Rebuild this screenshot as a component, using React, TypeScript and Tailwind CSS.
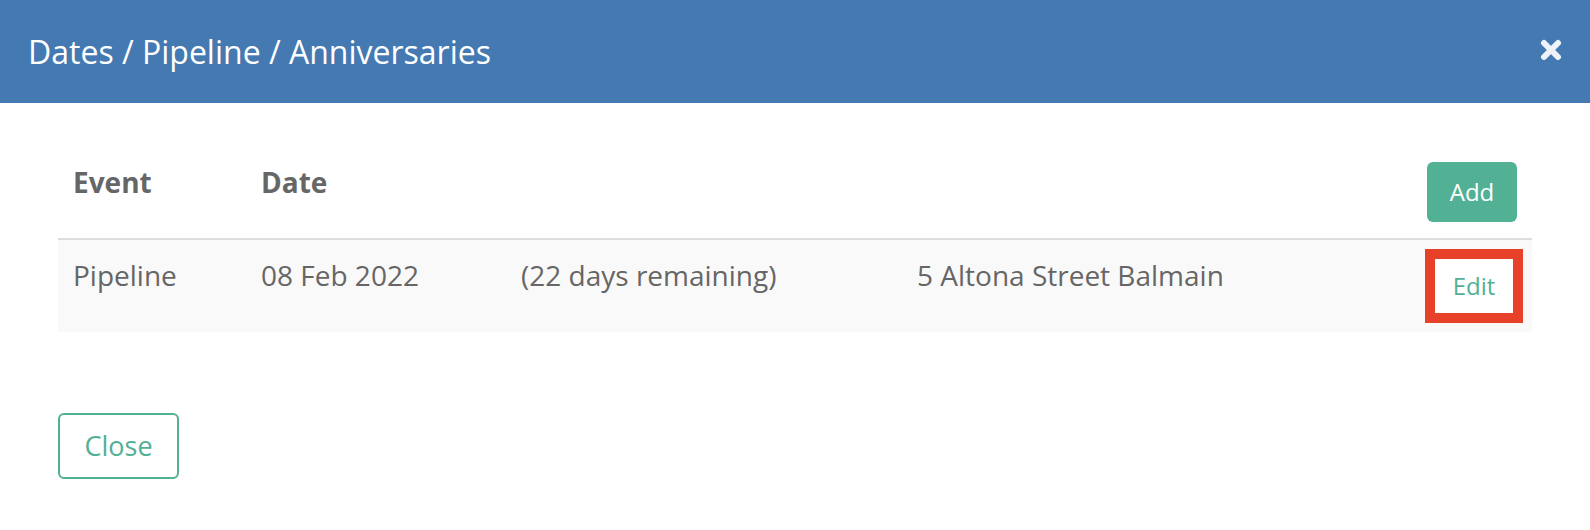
import React from "react";

export default function App() {
  const font = { fontFamily: '"Open Sans", "Noto Sans", sans-serif' };
  return (
    <div className="w-[1590px] h-[530px] bg-white overflow-hidden" style={font}>
      <div className="h-[103px] bg-[#4479b2] flex items-center justify-between pl-[28px] pr-[28px]">
        <div className="text-[32px] leading-[40px] text-white">Dates / Pipeline / Anniversaries</div>
        <svg width="22" height="22" viewBox="0 0 22 22" className="mt-[-4px]">
          <path d="M4 4 L18 18 M18 4 L4 18" stroke="#eef3f9" strokeWidth="6" strokeLinecap="round" />
        </svg>
      </div>
      <div className="px-[58px] pt-[43px]">
        <div className="flex h-[94px] items-start pt-[16px] border-b-2 border-[#dddddd] text-[28px] leading-[40px] font-bold text-[#666666]">
          <div className="w-[188px] pl-[15px]">Event</div>
          <div className="w-[257px] pl-[15px]">Date</div>
          <div className="flex-1" />
          <div className="pr-[15px]">
            <div className="w-[90px] h-[60px] rounded-[6px] bg-[#52b095] text-white text-[24px] font-normal flex items-center justify-center">
              Add
            </div>
          </div>
        </div>
        <div className="flex h-[92px] bg-[#f9f9f9] text-[28px] leading-[40px] text-[#666666]">
          <div className="w-[188px] pl-[15px] pt-[15px]">Pipeline</div>
          <div className="w-[257px] pl-[15px] pt-[15px]">08 Feb 2022</div>
          <div className="w-[397px] pl-[18px] pt-[15px]">(22 days remaining)</div>
          <div className="pl-[17px] pt-[15px]">5 Altona Street Balmain</div>
          <div className="flex-1" />
          <div className="pr-[9px] self-center">
            <div className="w-[98px] h-[74px] border-[10px] border-[#e8412a] bg-white flex items-center justify-center text-[24px] text-[#52b095]">
              Edit
            </div>
          </div>
        </div>
        <div className="mt-[81px]">
          <div className="w-[121px] h-[66px] border-2 border-[#52b095] rounded-[6px] flex items-center justify-center text-[27px] text-[#52b095]">
            Close
          </div>
        </div>
      </div>
    </div>
  );
}
